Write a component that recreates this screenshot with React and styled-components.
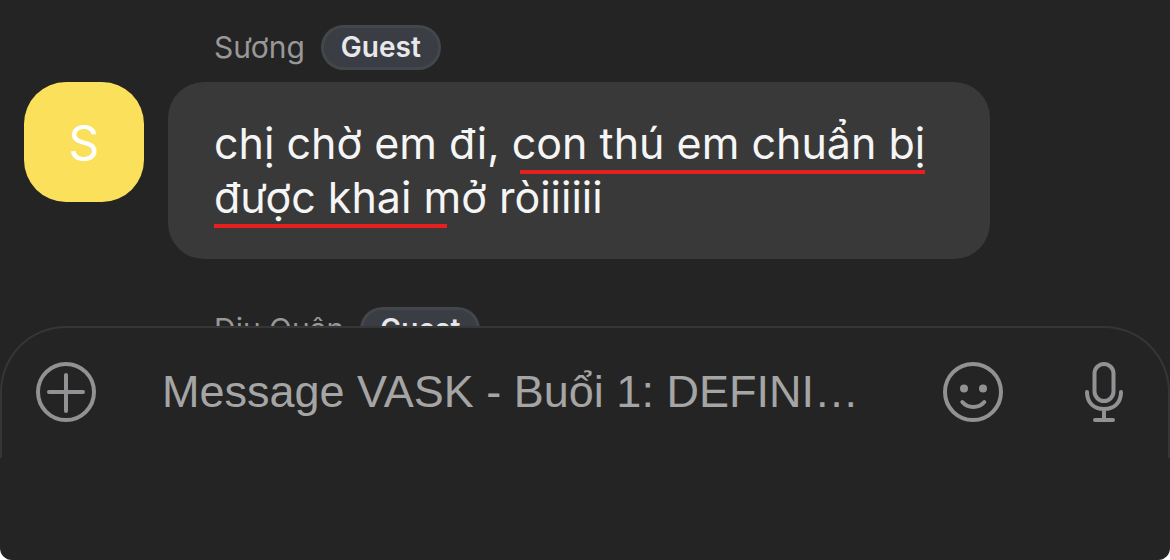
import React from 'react'
import styled, { createGlobalStyle } from 'styled-components'

const GlobalStyle = createGlobalStyle`
    * {
        box-sizing: border-box;
    }
    body {
        margin: 0;
        background: #ffffff;
        font-family: Inter, "Noto Sans", sans-serif;
    }
`

const Screen = styled.div`
    display: flex;
    flex-direction: column;
    height: 100vh;
    overflow: hidden;
    background: #242424;
    border-radius: 0 0 12px 12px;
`

const Thread = styled.main`
    flex: 1;
    min-height: 0;
    overflow: hidden;
    display: flex;
    flex-direction: column;
    gap: 48px;
    padding: 25px 24px 0;
`

const Message = styled.article`
    display: grid;
    grid-template-columns: 120px minmax(0, 1fr);
    column-gap: 24px;
    row-gap: 12px;
    flex-shrink: 0;
`

const Meta = styled.header`
    grid-column: 2;
    display: flex;
    align-items: center;
    gap: 16px;
    padding-left: 46px;
`

const Author = styled.span`
    color: #989898;
    font-size: 30px;
    line-height: 45px;
`

const Badge = styled.span`
    padding: 0 17px;
    border: 3px solid #43474b;
    border-radius: 24px;
    background: #3a3d43;
    color: #e8e8ec;
    font-size: 28px;
    font-weight: 600;
    line-height: 39px;
`

const Avatar = styled.div`
    display: flex;
    align-items: center;
    justify-content: center;
    width: 120px;
    height: 120px;
    border-radius: 42px;
    background: ${({ color }) => color};
    color: #ffffff;
    font-size: 48px;
`

const Bubble = styled.p`
    justify-self: start;
    max-width: 822px;
    margin: 0;
    padding: 34px 46px 35px;
    border-radius: 36px;
    background: #393939;
    color: #f5f5f5;
    font-size: 43px;
    line-height: 54px;
`

const Marked = styled.span`
    position: relative;
    white-space: nowrap;

    &::after {
        content: "";
        position: absolute;
        left: ${({ start }) => start}px;
        right: ${({ end }) => end}px;
        bottom: -5px;
        height: 4px;
        background: #e5201e;
    }
`

const Composer = styled.form`
    display: flex;
    align-items: center;
    padding: 34px 34px 36px;
    border: 2px solid #363637;
    border-bottom: none;
    border-radius: 66px 66px 0 0;
`

const IconButton = styled.button`
    display: flex;
    flex-shrink: 0;
    padding: 0;
    border: none;
    background: none;
    color: #929295;
`

const MessageInput = styled.input`
    flex: 1;
    min-width: 0;
    height: 60px;
    margin: 0 64px 0 66px;
    padding: 0;
    border: none;
    outline: none;
    background: none;
    color: #f5f5f5;
    font-family: "Liberation Sans", Arial, sans-serif;
    font-size: 45px;
    text-overflow: ellipsis;

    &::placeholder {
        color: #a5a5a5;
        opacity: 1;
    }
`

const Actions = styled.div`
    display: flex;
    gap: 71px;
`

const SafeArea = styled.footer`
    height: 102px;
    flex-shrink: 0;
`

const Icon = ({ children }) => (
    <svg width="60" height="60" viewBox="0 0 60 60" fill="none" stroke="currentColor"
        strokeWidth="4" strokeLinecap="round" aria-hidden="true">
        {children}
    </svg>
)

const PlusIcon = () => (
    <Icon>
        <circle cx="30" cy="30" r="28" />
        <path d="M13 30h34M30 13v36" />
    </Icon>
)

const SmileIcon = () => (
    <Icon>
        <circle cx="30" cy="30" r="28" />
        <circle cx="21" cy="26.500" r="4" fill="currentColor" stroke="none" />
        <circle cx="40" cy="26.500" r="4" fill="currentColor" stroke="none" />
        <path d="M19.300 40c5.500 6.600 16.500 6.600 22 0" />
    </Icon>
)

const MicIcon = () => (
    <Icon>
        <rect x="20.500" y="2" width="19" height="37" rx="9.500" />
        <path d="M13 30c0 11 7 17 17 17s17-6 17-17M30 47v11M21 58h18" />
    </Icon>
)

const MessageMeta = ({ author }) => (
    <Meta>
        <Author>{author}</Author>
        <Badge>Guest</Badge>
    </Meta>
)

const App = () => (
    <>
        <GlobalStyle />
        <Screen>
            <Thread>
                <Message>
                    <MessageMeta author="Sương" />
                    <Avatar color="#fbe05b">S</Avatar>
                    <Bubble>
                        chị chờ em đi, <Marked start={8} end={0}>con thú em chuẩn bị</Marked>{" "}
                        <Marked start={0} end={14}>được khai m</Marked>ở ròiiiiii
                    </Bubble>
                </Message>
                <Message>
                    <MessageMeta author="Dịu Quân" />
                </Message>
            </Thread>
            <Composer onSubmit={event => event.preventDefault()}>
                <IconButton type="button" aria-label="Add attachment"><PlusIcon /></IconButton>
                <MessageInput aria-label="Message" placeholder="Message VASK - Buổi 1: DEFINI…" />
                <Actions>
                    <IconButton type="button" aria-label="Emoji"><SmileIcon /></IconButton>
                    <IconButton type="button" aria-label="Record voice"><MicIcon /></IconButton>
                </Actions>
            </Composer>
            <SafeArea />
        </Screen>
    </>
)

export default App
